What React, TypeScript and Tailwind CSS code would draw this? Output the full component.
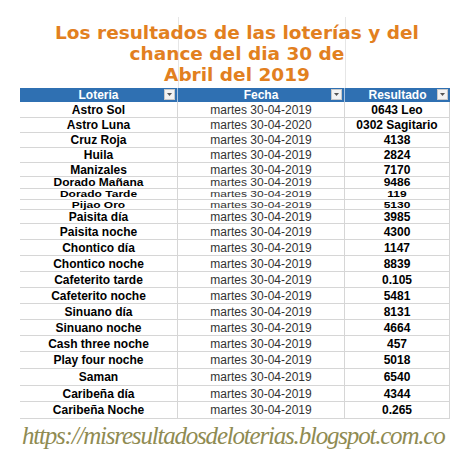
import React from "react";

// [lotería, fecha, resultado, alto de fila, compresión del texto]
const rows: [string, string, string, string, string][] = [
  ["Astro Sol", "martes 30-04-2019", "0643 Leo", "h-[16px]", ""],
  ["Astro Luna", "martes 30-04-2020", "0302 Sagitario", "h-[15px]", ""],
  ["Cruz Roja", "martes 30-04-2019", "4138", "h-[15px]", ""],
  ["Huila", "martes 30-04-2019", "2824", "h-[15px]", ""],
  ["Manizales", "martes 30-04-2019", "7170", "h-[14px]", ""],
  ["Dorado Mañana", "martes 30-04-2019", "9486", "h-[12px]", "scale-y-[0.87]"],
  ["Dorado Tarde", "martes 30-04-2019", "119", "h-[11px]", "scale-y-[0.8]"],
  ["Pijao Oro", "martes 30-04-2019", "5130", "h-[10px]", "scale-y-[0.72]"],
  ["Paisita día", "martes 30-04-2019", "3985", "h-[14px]", ""],
  ["Paisita noche", "martes 30-04-2019", "4300", "h-[16px]", ""],
  ["Chontico día", "martes 30-04-2019", "1147", "h-[16px]", ""],
  ["Chontico noche", "martes 30-04-2019", "8839", "h-[16px]", ""],
  ["Cafeterito tarde", "martes 30-04-2019", "0.105", "h-[16px]", ""],
  ["Cafeterito noche", "martes 30-04-2019", "5481", "h-[16px]", ""],
  ["Sinuano día", "martes 30-04-2019", "8131", "h-[16px]", ""],
  ["Sinuano noche", "martes 30-04-2019", "4664", "h-[16px]", ""],
  ["Cash three noche", "martes 30-04-2019", "457", "h-[16px]", ""],
  ["Play four noche", "martes 30-04-2019", "5018", "h-[17px]", ""],
  ["Saman", "martes 30-04-2019", "6540", "h-[17px]", ""],
  ["Caribeña día", "martes 30-04-2019", "4344", "h-[16px]", ""],
  ["Caribeña Noche", "martes 30-04-2019", "0.265", "h-[17px]", ""],
];

// botón de filtro estilo Excel
function FilterButton() {
  return (
    <span className="absolute right-[2px] top-[1px] w-[11px] h-[11px] bg-[#f3f3f3] border border-[#c8c8c8] flex items-center justify-center">
      <svg width="5" height="3" viewBox="0 0 5 3">
        <path d="M0 0 L5 0 L2.5 3 Z" fill="#555" />
      </svg>
    </span>
  );
}

function HeaderCell({ label, border }: { label: string; border?: boolean }) {
  return (
    <div
      className={
        "relative h-full flex items-center justify-center text-white font-bold " +
        (border ? "border-r border-[#a9c4e2]" : "")
      }
    >
      {label}
      <FilterButton />
    </div>
  );
}

export default function App() {
  return (
    <div
      className="w-[474px] h-[474px] bg-white overflow-hidden flex flex-col"
      style={{ fontFamily: '"Liberation Sans", Arial, sans-serif' }}
    >
      {/* título */}
      <div className="relative h-[88px] pt-[22px]">
        <div className="absolute left-[178px] top-[17px] bottom-0 w-px bg-[#e6e6e6]" />
        <div className="absolute left-[345px] top-[17px] bottom-0 w-px bg-[#e6e6e6]" />
        <h1
          className="relative text-center text-[#e2801f] font-bold text-[18.5px] leading-[21px]"
          style={{ fontFamily: '"DejaVu Sans", Verdana, sans-serif' }}
        >
          Los resultados de las loterías y del
          <br />
          chance del dia 30 de
          <br />
          Abril del 2019
        </h1>
      </div>

      {/* tabla */}
      <div className="ml-[20px] w-[430px] text-[12px] leading-[10px]">
        <div className="grid grid-cols-[158px_167px_105px] h-[14px] bg-[#2f70b2]">
          <HeaderCell label="Loteria" border />
          <HeaderCell label="Fecha" border />
          <HeaderCell label="Resultado" />
        </div>
        {rows.map(([lot, fecha, res, h, squeeze]) => (
          <div
            key={lot}
            className={"grid grid-cols-[158px_167px_105px] border-b border-[#d6d6d6] " + h}
          >
            <div className="flex items-center justify-center border-r border-[#d6d6d6] font-bold text-black whitespace-nowrap">
              <span className={squeeze}>{lot}</span>
            </div>
            <div className="flex items-center justify-center border-r border-[#d6d6d6] text-[#333]">
              <span className={squeeze}>{fecha}</span>
            </div>
            <div className="flex items-center justify-center border-r border-[#d6d6d6] font-bold text-black whitespace-nowrap">
              <span className={squeeze}>{res}</span>
            </div>
          </div>
        ))}
      </div>

      {/* url */}
      <div className="flex">
        <p
          className="ml-[22px] mt-[3px] text-[25px] leading-[28px] tracking-[-1.2px] italic text-[#8f8b52] whitespace-nowrap"
          style={{ fontFamily: '"Liberation Serif", "Times New Roman", serif' }}
        >
          https://misresultadosdeloterias.blogspot.com.co
        </p>
      </div>
    </div>
  );
}
